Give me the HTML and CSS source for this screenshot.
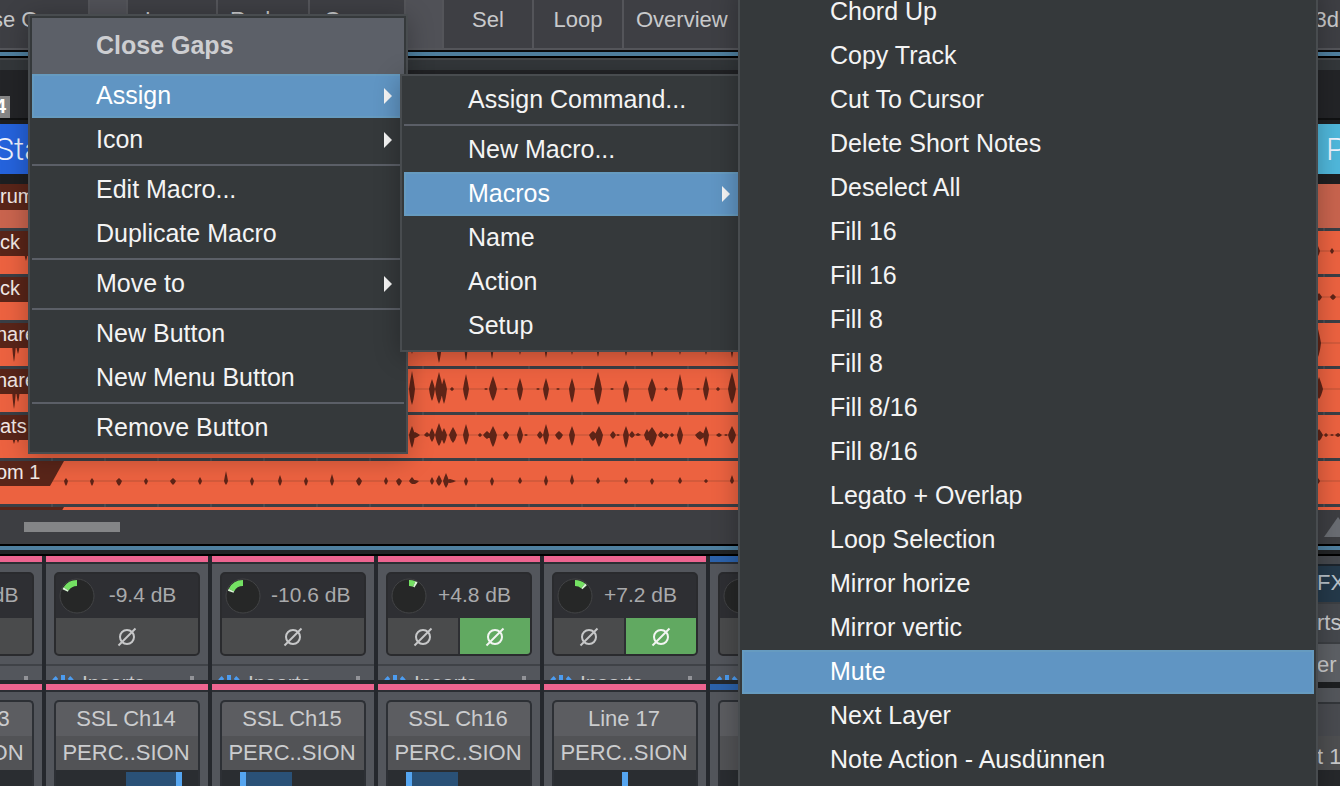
FILE: index.html
```html
<!DOCTYPE html>
<html lang="en">
<head>
<meta charset="utf-8">
<title>Song - Arrangement</title>
<link rel="stylesheet" href="styles.css">
</head>
<body>
<svg class="defs" aria-hidden="true">
  <symbol id="phase" viewBox="0 0 20 20"><circle cx="10" cy="10" r="7"/><path d="M1.500 18.500 18.500 1.500"/></symbol>
  <symbol id="power" viewBox="0 0 24 24"><path d="M6 2.500A11 11 0 0 0 6 20M18 2.500A11 11 0 0 1 18 20M12 0V12"/></symbol>
</svg>
<main class="app">
  <div class="toolbar">
    <button class="tool wide">Close Gaps</button>
    <span class="tool-gap"></span>
    <button class="tool start">Lanes</button>
    <button class="tool start mid">Redo</button>
    <button class="tool start last">Group</button>
    <span class="tool-gap"></span>
    <button class="tool">Sel</button>
    <button class="tool">Loop</button>
    <button class="tool fill">Overview</button>
    <button class="tool end">3d</button>
  </div>
  <div class="splitter top"></div>
  <div class="ruler"><span class="signature">4</span></div>
  <div class="markers"><span class="marker">Start</span><span class="marker cyan">P</span></div>
  <section class="tracks">
    <div class="track folder"><span class="clip">rums</span></div>
    <div class="track" data-wave="kick1"><span class="clip">ck</span></div>
    <div class="track" data-wave="kick2"><span class="clip">ck</span></div>
    <div class="track" data-wave="snare1"><span class="clip outset">nare</span></div>
    <div class="track" data-wave="snare2"><span class="clip outset">nare</span></div>
    <div class="track" data-wave="hats"><span class="clip">ats</span></div>
    <div class="track" data-wave="tom"><span class="clip cut outset">om 1</span></div>
    <div class="track sliver"><span class="clip cut"></span></div>
  </section>
  <div class="scroll"><span class="thumb"></span><svg class="zoomer" viewBox="0 0 30 20"><path d="M0 20 14 0 28 20Z"/></svg></div>
  <div class="splitter bottom"></div>
  <section class="mixer">
    <div class="strips">
      <article class="channel">
        <div class="upper"><div class="gain"><div class="level"><svg class="knob" viewBox="-18 -18 36 36"><circle r="17"/></svg><span>-10.6 dB</span></div><div class="phases"><button aria-label="Phase"><svg><use href="#phase"/></svg></button></div></div>
        <div class="inserts"><svg><use href="#power"/></svg><span>Inserts</span><i></i></div></div>
        <div class="lower"><div class="plate"><div class="input">SSL Ch13</div><div class="bus">PERC..SION</div><div class="pan"></div></div></div>
      </article>
      <article class="channel">
        <div class="upper"><div class="gain"><div class="level"><svg class="knob" viewBox="-18 -18 36 36"><circle r="17"/><path class="arc" d="M0-13A13 13 0 0 0-10.900-7.100"/><path class="tip" d="M-10.900-7.100A13 13 0 0 0-11.800-5.500"/></svg><span>-9.4 dB</span></div><div class="phases"><button aria-label="Phase"><svg><use href="#phase"/></svg></button></div></div>
        <div class="inserts"><svg><use href="#power"/></svg><span>Inserts</span><i></i></div></div>
        <div class="lower"><div class="plate"><div class="input">SSL Ch14</div><div class="bus">PERC..SION</div><div class="pan right"><b></b><em></em></div></div></div>
      </article>
      <article class="channel">
        <div class="upper"><div class="gain"><div class="level"><svg class="knob" viewBox="-18 -18 36 36"><circle r="17"/><path class="arc" d="M0-13A13 13 0 0 0-11.600-5.900"/><path class="tip" d="M-11.600-5.900A13 13 0 0 0-12.300-4.200"/></svg><span>-10.6 dB</span></div><div class="phases"><button aria-label="Phase"><svg><use href="#phase"/></svg></button></div></div>
        <div class="inserts"><svg><use href="#power"/></svg><span>Inserts</span><i></i></div></div>
        <div class="lower"><div class="plate"><div class="input">SSL Ch15</div><div class="bus">PERC..SION</div><div class="pan left"><em></em><b></b></div></div></div>
      </article>
      <article class="channel">
        <div class="upper"><div class="gain"><div class="level"><svg class="knob" viewBox="-18 -18 36 36"><circle r="17"/><path class="arc" d="M0-13A13 13 0 0 1 5.300-11.900"/><path class="tip" d="M5.300-11.900A13 13 0 0 1 7-11"/></svg><span>+4.8 dB</span></div><div class="phases"><button aria-label="Phase left"><svg><use href="#phase"/></svg></button><button class="on" aria-label="Phase right"><svg><use href="#phase"/></svg></button></div></div>
        <div class="inserts"><svg><use href="#power"/></svg><span>Inserts</span><i></i></div></div>
        <div class="lower"><div class="plate"><div class="input">SSL Ch16</div><div class="bus">PERC..SION</div><div class="pan left"><em></em><b></b></div></div></div>
      </article>
      <article class="channel">
        <div class="upper"><div class="gain"><div class="level"><svg class="knob" viewBox="-18 -18 36 36"><circle r="17"/><path class="arc" d="M0-13A13 13 0 0 1 8.200-10.100"/><path class="tip" d="M8.200-10.100A13 13 0 0 1 9.600-8.800"/></svg><span>+7.2 dB</span></div><div class="phases"><button aria-label="Phase left"><svg><use href="#phase"/></svg></button><button class="on" aria-label="Phase right"><svg><use href="#phase"/></svg></button></div></div>
        <div class="inserts"><svg><use href="#power"/></svg><span>Inserts</span><i></i></div></div>
        <div class="lower"><div class="plate"><div class="input">Line 17</div><div class="bus">PERC..SION</div><div class="pan center"><em></em></div></div></div>
      </article>
      <article class="channel blue">
        <div class="upper"><div class="gain"><div class="level"><svg class="knob" viewBox="-18 -18 36 36"><circle r="17"/></svg></div><div class="phases"><button aria-label="Phase"></button></div></div>
        <div class="inserts"><svg><use href="#power"/></svg><i></i></div></div>
        <div class="lower"><div class="plate"><div class="input"></div><div class="bus"></div><div class="pan"></div></div></div>
      </article>
    </div>
    <aside class="side">
      <div class="fx">FX</div>
      <div class="slot">rts</div>
      <div class="slot light">er</div>
      <div class="edge"></div>
      <div class="blank"></div>
      <div class="slot out">t 1</div>
    </aside>
  </section>
</main>

<div class="menu context" role="menu">
  <div class="title">Close Gaps</div>
  <button class="item active" role="menuitem">Assign<span class="arrow"></span></button>
  <button class="item" role="menuitem">Icon<span class="arrow"></span></button>
  <hr>
  <button class="item" role="menuitem">Edit Macro...</button>
  <button class="item" role="menuitem">Duplicate Macro</button>
  <hr>
  <button class="item" role="menuitem">Move to<span class="arrow"></span></button>
  <hr>
  <button class="item" role="menuitem">New Button</button>
  <button class="item" role="menuitem">New Menu Button</button>
  <hr>
  <button class="item" role="menuitem">Remove Button</button>
</div>

<div class="menu assign" role="menu">
  <button class="item" role="menuitem">Assign Command...</button>
  <hr>
  <button class="item" role="menuitem">New Macro...</button>
  <button class="item active" role="menuitem">Macros<span class="arrow"></span></button>
  <button class="item" role="menuitem">Name</button>
  <button class="item" role="menuitem">Action</button>
  <button class="item" role="menuitem">Setup</button>
</div>

<div class="menu macros" role="menu">
  <button class="item" role="menuitem">Chord Up</button>
  <button class="item" role="menuitem">Copy Track</button>
  <button class="item" role="menuitem">Cut To Cursor</button>
  <button class="item" role="menuitem">Delete Short Notes</button>
  <button class="item" role="menuitem">Deselect All</button>
  <button class="item" role="menuitem">Fill 16</button>
  <button class="item" role="menuitem">Fill 16</button>
  <button class="item" role="menuitem">Fill 8</button>
  <button class="item" role="menuitem">Fill 8</button>
  <button class="item" role="menuitem">Fill 8/16</button>
  <button class="item" role="menuitem">Fill 8/16</button>
  <button class="item" role="menuitem">Legato + Overlap</button>
  <button class="item" role="menuitem">Loop Selection</button>
  <button class="item" role="menuitem">Mirror horize</button>
  <button class="item" role="menuitem">Mirror vertic</button>
  <button class="item active" role="menuitem">Mute</button>
  <button class="item" role="menuitem">Next Layer</button>
  <button class="item" role="menuitem">Note Action - Ausdünnen</button>
</div>
<script src="waves.js"></script>
</body>
</html>
```

FILE: styles.css
```css
* { box-sizing: border-box; }
html, body { height: 100%; }
body {
  margin: 0;
  overflow: hidden;
  position: relative;
  background: #232427;
  color: #c8c9cb;
  font-family: "Liberation Sans", Arial, sans-serif;
  font-size: 22px;
}
button {
  margin: 0;
  padding: 0;
  border: 0;
  background: none;
  color: inherit;
  font: inherit;
}
.defs { position: absolute; width: 0; height: 0; }
.app { display: flex; flex-direction: column; height: 100%; overflow: hidden; isolation: isolate; }
.app > * { flex: none; }

/* toolbar */
.toolbar {
  display: flex;
  gap: 2px;
  height: 50px;
  padding-bottom: 2px;
  margin-left: -55px;
  background: #54555a;
  overflow: hidden;
}
.tool { flex: none; width: 88px; padding-bottom: 8px; background: #3e3f44; white-space: nowrap; }
.tool.wide { width: 143px; }
.tool.start { padding-left: 17px; text-align: left; }
.tool.mid { width: 90px; padding-left: 12px; }
.tool.last { width: 94px; padding-left: 14px; }
.tool.fill { flex: 1; padding-left: 12px; text-align: left; }
.tool.end { width: 60px; padding-right: 1px; text-align: right; }
.tool-gap { width: 36px; background: #505157; }

.splitter { background: #4f7f9f; }
.splitter.top { height: 8px; border-top: 2px solid #0b0b0c; border-bottom: 2px solid #000; }
.splitter.bottom {
  height: 12px;
  border-top: 2px solid #000;
  border-bottom: 2px solid #000;
  background: linear-gradient(#4f7f9f 4px, #222426 4px);
}

/* ruler and markers */
.ruler {
  display: flex;
  align-items: flex-end;
  height: 62px;
  border-top: 2px solid #44474a;
  border-bottom: 2px solid #111213;
  background: linear-gradient(#33373a 10px, #232427 10px);
}
.signature {
  display: flex;
  justify-content: flex-end;
  width: 10px;
  height: 22px;
  padding-right: 4px;
  background: #868686;
  color: #fff;
  font-size: 20px;
  font-weight: bold;
  line-height: 20px;
}
.markers {
  display: flex;
  height: 64px;
  padding: 4px 0 10px;
  background: #1e1f21;
  font-family: Roboto, sans-serif;
  font-size: 32px;
  font-weight: 300;
  line-height: 50px;
  color: #f0f4ff;
}
.marker { flex: 1; background: #2563dc; text-indent: -5px; }
.marker.cyan { flex: none; width: 40px; background: #50b8dc; text-indent: 26px; }

/* tracks */
.tracks {
  display: flex;
  flex-direction: column;
  gap: 3px;
  background: repeating-linear-gradient(90deg, #3a3f46 0 51px, #484c52 51px 53px);
}
.track { position: relative; height: 43px; background: #ec6240; overflow: hidden; }
.track.folder { height: 44px; background: #c9644e; }
.track.sliver { height: 3px; }
.track svg { position: absolute; left: 0; top: 0; width: 1340px; height: 43px; fill: #5e2417; }
.track svg rect { fill: #d45a3b; }
.clip {
  display: block;
  position: relative;
  z-index: 1;
  width: 100px;
  height: 25px;
  background: #592519;
  color: #f3e9e6;
  font-size: 20px;
  line-height: 23px;
}
.folder .clip { height: 26px; line-height: 24px; }
.clip.outset { text-indent: -4px; }
.clip.cut { width: 64px; clip-path: polygon(0 0, 100% 0, 50px 100%, 0 100%); }

.scroll { display: flex; justify-content: space-between; align-items: center; height: 34px; padding-left: 24px; background: #3d3e42; }
.thumb { width: 96px; height: 10px; background: #848587; }
.zoomer { width: 30px; height: 20px; margin-right: -14px; fill: #6a6d73; }

/* mixer */
.app > .mixer { display: flex; flex: 1; min-height: 0; }
.strips { display: flex; flex: 1; gap: 4px; margin-left: -120px; background: #25282d; overflow: hidden; }
.channel { display: flex; flex-direction: column; flex: none; width: 162px; --band: #ed6490; }
.channel.blue { --band: #2c62ab; }
.upper {
  flex: none;
  height: 124px;
  padding-top: 10px;
  border-top: 6px solid var(--band);
  background: linear-gradient(#2b2e33 2px, #53565c 2px);
  overflow: hidden;
}
.gain { height: 84px; margin: 0 8px; border: 2px solid #2a2b2e; border-radius: 5px; background: #2e2f33; overflow: hidden; }
.level { display: flex; align-items: center; height: 44px; padding: 0 18px 0 3px; color: #a9aaac; font-size: 21px; }
.level span { flex: 1; padding: 0 0 2px 10px; text-align: center; white-space: nowrap; }
.knob { flex: none; width: 36px; height: 36px; fill: #262727; }
.knob circle { stroke: #434446; stroke-width: 1; }
.knob path { fill: none; stroke-width: 6; }
.knob .arc { stroke: #74e163; }
.knob .tip { stroke: #d9f5d4; }
.phases { display: flex; gap: 2px; height: 36px; color: #c6c7c8; }
.phases button { display: flex; flex: 1; align-items: center; justify-content: center; padding-top: 2px; background: #4a4b4c; }
.phases .on { background: #61a961; color: #f2f5f2; }
.phases svg { width: 20px; height: 20px; fill: none; stroke: currentColor; stroke-width: 2; }
.inserts {
  display: flex;
  align-items: flex-start;
  justify-content: space-between;
  height: 40px;
  margin-top: 8px;
  padding: 6px 14px 0 5px;
  border-top: 2px solid #3f4247;
  font-size: 21px;
  line-height: 22px;
}
.inserts svg { width: 24px; height: 24px; margin-top: 3px; fill: none; stroke: #4c9cf0; stroke-width: 4; }
.inserts span { flex: 1; padding-left: 7px; }
.inserts i { width: 4px; height: 10px; margin-top: 4px; background: #929398; }
.lower {
  flex: 1;
  margin-top: 4px;
  padding: 10px 8px 0;
  border-top: 6px solid var(--band);
  background: linear-gradient(#2b2e33 2px, #53565c 2px);
}
.plate { height: 100%; border: 2px solid #2d3035; border-bottom: 0; border-radius: 5px 5px 0 0; background: #2a2d31; overflow: hidden; text-align: center; color: #cbccce; }
.input, .bus { height: 34px; padding-right: 2px; line-height: 34px; background: #5c5d61; white-space: nowrap; }
.bus { background: #525356; }
.pan { display: flex; height: 16px; padding-top: 2px; }
.pan em { width: 6px; background: #55a5f0; }
.pan b { width: 48px; background: #2a5177; }
.pan.right { padding-left: 70px; }
.pan.right b { width: 50px; }
.pan.left { padding-left: 18px; }
.pan.left b { width: 46px; }
.pan.center { justify-content: center; }

.side { display: flex; flex-direction: column; flex: none; width: 60px; padding-top: 8px; background: #45484d; }
.side > div { flex: none; }
.fx, .slot { height: 40px; padding-left: 37px; line-height: 40px; overflow: hidden; white-space: nowrap; }
.fx { height: 38px; background: #24394a; border-top: 2px solid #1c242c; line-height: 34px; color: #b9c2c9; }
.slot { border-top: 2px solid #3c3f43; line-height: 38px; }
.slot.light { background: #5d6065; line-height: 42px; }
.side .edge { height: 6px; background: #1d1f21; }
.blank { height: 48px; border-top: 4px solid #54575c; background: linear-gradient(#54575c 10px, #33363a 10px 12px, #494b50 12px); }
.slot.out { flex: 1; background: linear-gradient(#4e4f51 34px, #26282b 34px); border: 0; line-height: 42px; }

/* menus */
.menu {
  position: absolute;
  padding: 2px;
  border: 2px solid #484c4f;
  background: #35393b;
  color: #f4f4f4;
  font-size: 25px;
  box-shadow: 0 4px 24px rgba(0, 0, 0, 0.28);
}
.menu .item {
  display: flex;
  align-items: center;
  justify-content: space-between;
  width: 100%;
  height: 44px;
  padding: 0 4px 2px 64px;
  text-align: left;
  white-space: nowrap;
}
.menu .active { background: #6095c3; color: #fff; box-shadow: inset 0 0 0 2px #669bc0; }
.menu hr { height: 2px; margin: 2px 0; border: 0; background: #5b5f67; }
.title { height: 56px; padding-left: 64px; line-height: 54px; background: #5c6068; color: #cdced1; font-weight: bold; }
.arrow { margin: 2px 8px 0 0; border: 8px solid transparent; border-left-color: #f6f6f6; border-right: 0; }
.context { left: 28px; top: 14px; width: 380px; }
.assign { left: 400px; top: 74px; width: 346px; }
.macros { left: 738px; top: -14px; bottom: -8px; width: 580px; }
.menu.macros .item { padding-left: 88px; }
```

FILE: waves.js
```js
// Transients per track: [x, height above axis, height below axis, half width]
const axis = 20;
const transients = {
  kick1: [[26,6,10,2],[1318,5,5,2],[1332,3,3,2]],
  kick2: [[1319,4,4,3],[1333,3,3,3]],
  snare1: [[14,18,19,2],[18,10,11,2],[412,10,11,2],[439,16,20,3],[466,14,18,2],[492,12,16,2],[520,10,12,2],[546,12,15,2],[572,10,12,2],[598,12,14,2],[626,10,13,2],[652,10,14,2],[680,10,12,2],[706,10,12,2],[732,12,15,2],[1318,14,14,3]],
  snare2: [[14,18,20,2],[18,10,13,2],[412,18,16,3],[432,10,12,3],[439,17,15,4],[444,11,15,3],[452,2,2,2],[466,15,12,3],[486,1,1,2],[493,13,12,4],[506,1,1,2],[520,11,12,3],[538,1,1,2],[546,11,12,3],[558,1,1,2],[572,11,14,3],[592,1,1,2],[598,17,16,4],[612,1,1,2],[626,9,14,3],[652,11,13,4],[666,2,2,2],[680,15,12,3],[698,1,1,2],[706,13,12,3],[718,2,2,2],[732,17,15,4],[1319,12,10,4]],
  hats: [[14,8,9,2],[18,8,8,2],[412,9,13,3],[415,3,3,5],[427,3,2,3],[432,7,7,3],[439,12,11,4],[444,7,9,3],[453,8,8,4],[466,11,10,3],[480,2,2,2],[487,4,4,4],[493,9,12,4],[506,4,5,3],[520,9,9,3],[526,1,1,2],[540,4,4,3],[546,11,10,3],[559,4,5,4],[572,9,11,3],[593,4,6,4],[599,9,12,4],[613,4,4,3],[618,1,1,2],[626,9,13,3],[632,4,3,3],[638,2,1,3],[647,6,6,3],[652,8,12,5],[661,4,3,3],[666,2,4,3],[672,2,2,2],[680,9,10,3],[700,4,5,5],[706,9,12,3],[719,2,2,3],[726,1,1,2],[732,9,9,4],[1319,6,6,4],[1326,2,2,2],[1332,1,1,2],[1338,2,2,3]],
  tom: [[66,3,5,2],[92,3,5,2],[119,3,5,3],[146,3,4,2],[173,3,4,3],[200,4,4,2],[226,10,4,2],[252,4,5,2],[280,6,5,2],[306,4,5,2],[332,7,5,2],[359,4,5,3],[386,4,4,2],[399,3,5,3],[412,4,3,3],[415,1,3,4],[432,4,4,2],[439,6,5,3],[446,8,7,3],[450,2,2,6],[466,4,5,2],[492,4,5,2],[520,4,3,2],[546,6,5,2],[572,7,4,2],[598,4,3,2],[626,4,3,2],[652,3,4,2],[680,4,3,2],[706,2,2,2],[732,6,3,2],[1318,3,3,2]]
};
const NS = "http://www.w3.org/2000/svg";
for (const track of document.querySelectorAll("[data-wave]")) {
  const svg = document.createElementNS(NS, "svg");
  const line = document.createElementNS(NS, "rect");
  line.setAttribute("y", axis - 1);
  line.setAttribute("width", "100%");
  line.setAttribute("height", 2);
  const path = document.createElementNS(NS, "path");
  path.setAttribute("d", transients[track.dataset.wave].map(([x, up, down, w]) =>
    `M${x - w} ${axis}Q${x - w * 0.6} ${axis - up / 2} ${x} ${axis - up}Q${x + w * 0.6} ${axis - up / 2} ${x + w} ${axis}Q${x + w * 0.6} ${axis + down * 0.7} ${x} ${axis + down}Q${x - w * 0.6} ${axis + down * 0.7} ${x - w} ${axis}Z`
  ).join(""));
  svg.append(line, path);
  track.append(svg);
}
```
